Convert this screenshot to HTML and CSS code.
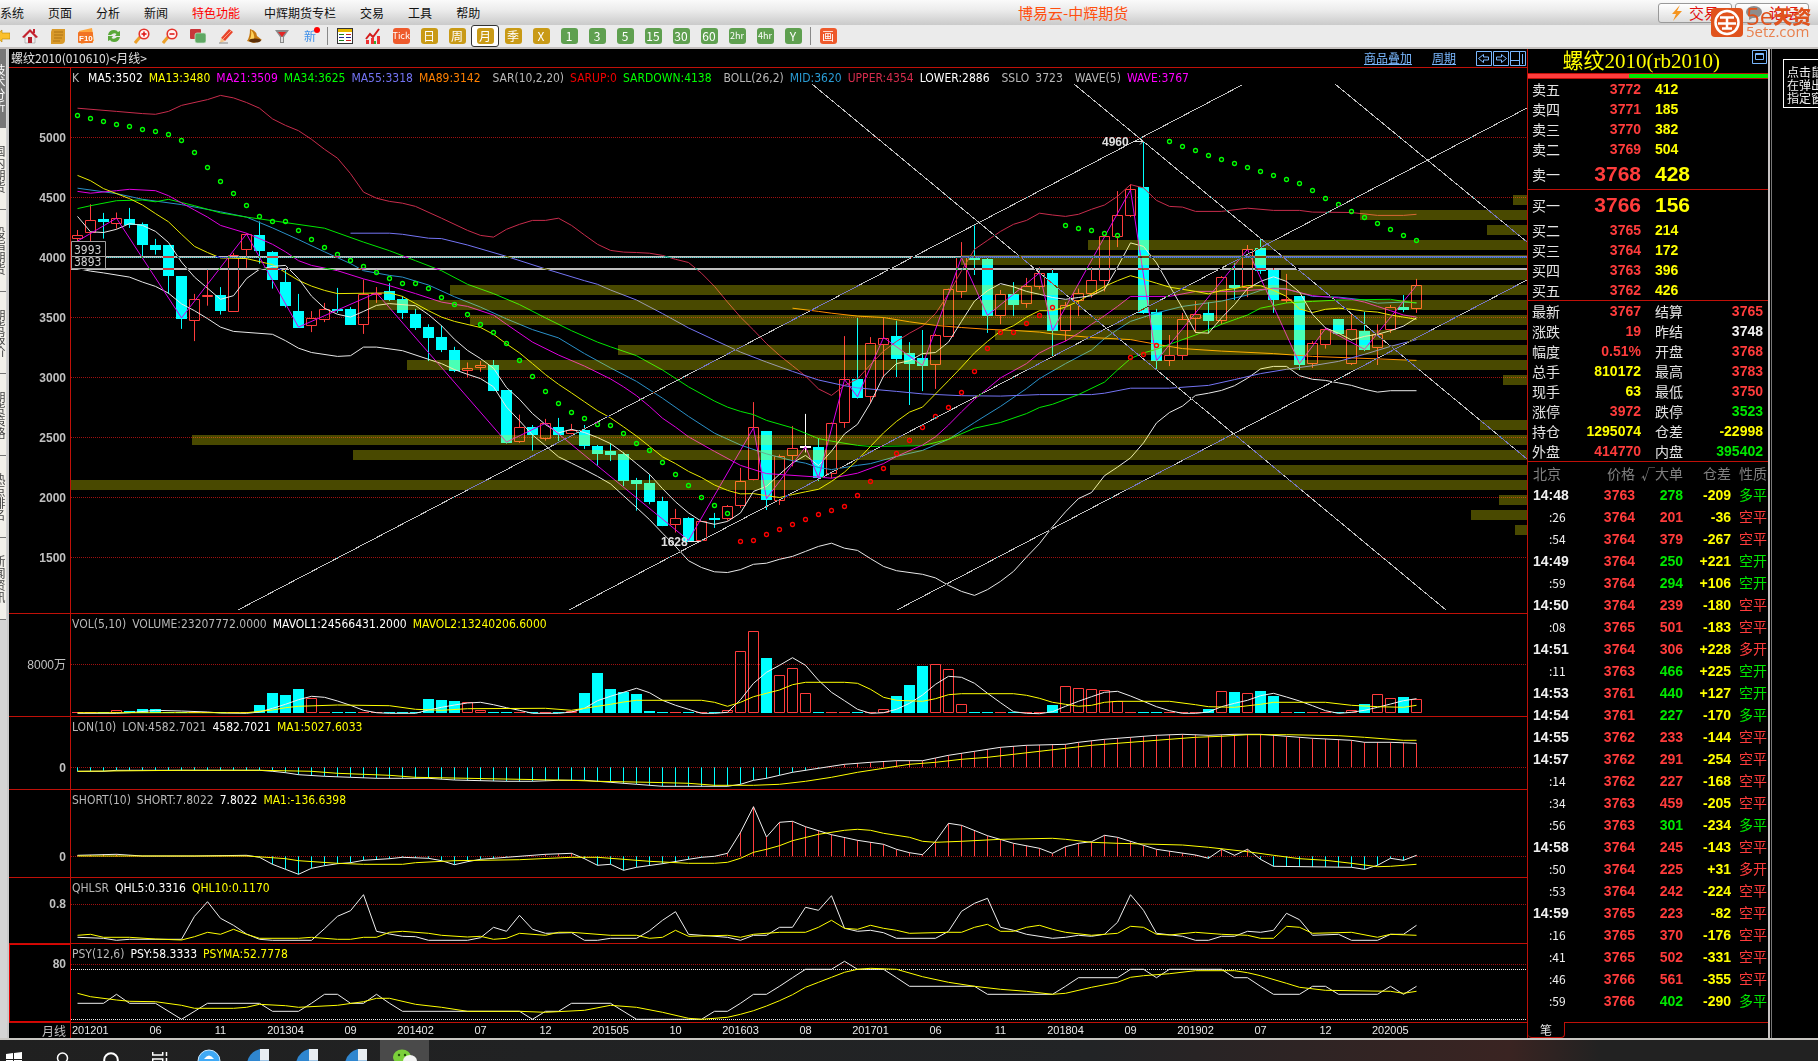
FILE: index.html
```html
<!DOCTYPE html>
<html lang="zh-CN">
<head>
<meta charset="utf-8">
<title>博易云-中辉期货</title>
<link rel="stylesheet" href="styles.css">
</head>
<body>
<header class="menubar">
  <nav class="menu">
    <a href="#">系统</a><a href="#">页面</a><a href="#">分析</a><a href="#">新闻</a><a href="#" class="hot">特色功能</a><a href="#">中辉期货专栏</a><a href="#">交易</a><a href="#">工具</a><a href="#">帮助</a>
  </nav>
  <h1 class="app-title">博易云-中辉期货</h1>
  <div class="head-actions">
    <button class="head-btn" type="button"><svg width="12" height="16" viewBox="0 0 12 16"><path d="M9 0 1 9h4L2 16 11 6H6z" fill="#f5951f"/></svg>交易</button>
    <button class="head-btn" type="button"><svg width="18" height="14" viewBox="0 0 18 14"><ellipse cx="9" cy="6" rx="8" ry="6" fill="#8d8d8d"/><path d="M4 9v5l5-3z" fill="#8d8d8d"/></svg>论坛</button>
  </div>
  <div class="brand">
    <svg width="32" height="29" viewBox="0 0 32 29"><rect width="32" height="29" rx="4" fill="#e0521c"/><circle cx="16" cy="14.500" r="11.500" fill="none" stroke="#fff" stroke-width="2.500"/><path d="M9 9.500h14M7 15.500h18M16 9v12M11 20.500h10" stroke="#fff" stroke-width="2.500" fill="none"/></svg>
    <div class="brand-text"><strong><span class="brand-num">5e</span>天资</strong><span class="brand-url">5etz.com</span></div>
  </div>
</header>
<div class="toolbar">
  <button type="button" aria-label="后退"><svg width="16" height="16" viewBox="0 0 16 16"><path d="M1 8 8 2v3h8v6H8v3z" fill="#fbc02d" stroke="#b98500" stroke-width=".6"/></svg></button>
  <button type="button" aria-label="首页"><svg width="16" height="16" viewBox="0 0 16 16"><path d="M3 8v7h10V8L8 3z" fill="#eee" stroke="#999" stroke-width=".6"/><path d="M0 9 8 1l8 8-2 1-6-6-6 6z" fill="#c4232f"/><path d="M6 15V9h4v6z" fill="#b2202b"/><path d="M11 1h2v4h-2z" fill="#c4232f"/></svg></button>
  <button type="button" aria-label="公告"><svg width="16" height="16" viewBox="0 0 16 16"><path d="M2 1h13v11q0 4-4 4H1V4z" fill="#d99a2b"/><path d="M4 4h9M4 7h9M4 10h8M3 13h7" stroke="#a26b10" stroke-width=".8"/></svg></button>
  <button type="button" aria-label="F10"><svg width="16" height="16" viewBox="0 0 16 16"><path d="M1 3 14 0l2 13-13 3z" fill="#ffa63d"/><rect y="4" width="15" height="11" rx="1" fill="#f27424"/><text x="1" y="13" class="ico-f10">F10</text></svg></button>
  <button type="button" aria-label="刷新"><svg width="16" height="16" viewBox="0 0 16 16"><path d="M2 7q1-5 6-5 3 0 4 2l2-1v5H9l1.500-2Q8 4 5 7zM14 9q-1 5-6 5-3 0-4-2l-2 1V8h5l-1.500 2Q8 12 11 9z" fill="#5aa83a"/></svg></button>
  <button type="button" aria-label="放大"><svg width="16" height="16" viewBox="0 0 16 16"><path d="m6 9-5 6" stroke="#eba02b" stroke-width="3"/><circle cx="10" cy="6" r="4.800" fill="#fff3f3" stroke="#e5332a" stroke-width="1.600"/><path d="M10 3.500v5M7.500 6h5" stroke="#d11" stroke-width="1.500"/></svg></button>
  <button type="button" aria-label="缩小"><svg width="16" height="16" viewBox="0 0 16 16"><path d="m6 9-5 6" stroke="#eba02b" stroke-width="3"/><circle cx="10" cy="6" r="4.800" fill="#fff3f3" stroke="#e5332a" stroke-width="1.600"/><path d="M7.500 6h5" stroke="#d11" stroke-width="1.500"/></svg></button>
  <button type="button" aria-label="叠加"><svg width="16" height="16" viewBox="0 0 16 16"><rect x="0" y="1" width="11" height="10" rx="1" fill="#c8363a"/><rect x="5" y="5" width="11" height="10" rx="2" fill="#5fa864" stroke="#cfe6cf" stroke-width=".7"/></svg></button>
  <button type="button" aria-label="画线"><svg width="16" height="16" viewBox="0 0 16 16"><path d="m3 10 8-9 4 3-8 9z" fill="#e8452c"/><path d="m3 10 4 3-5 2z" fill="#f3c58b"/><path d="m5 11 8-8" stroke="#ff9d7e"/><path d="M1 15h9" stroke="#888"/></svg></button>
  <button type="button" aria-label="预警"><svg width="16" height="16" viewBox="0 0 16 16"><path d="M4 1q7 2 7 7l5 4-8 3-7-2q3-4 3-12z" fill="#c67a13"/><path d="M5 2q4 4 3 9l-5 2q3-5 2-11z" fill="#ffd35c"/><ellipse cx="9" cy="12.500" rx="6" ry="2" fill="#5c2f08"/></svg></button>
  <button type="button" aria-label="过滤"><svg width="16" height="16" viewBox="0 0 16 16"><path d="M1 2h14l-5 7v6H6V9z" fill="#8b8b8b"/><path d="M4 4h8l-4 5z" fill="#e32626"/><path d="M7 9h2v5H7z" fill="#ddd"/></svg></button>
  <button type="button" class="new-btn">新<i></i></button>
  <span class="sep"></span>
  <button type="button" aria-label="报价"><svg width="16" height="16" viewBox="0 0 16 16"><rect x=".5" y=".5" width="15" height="15" fill="#fff" stroke="#333"/><path d="M1 2.500h14" stroke="#e7b800" stroke-width="3"/><path d="M2 6.500h5M2 12.500h5" stroke="#1a7f1a"/><path d="M9 6.500h5M9 12.500h5" stroke="#c22"/><path d="M2 9.500h5M9 9.500h5" stroke="#229"/></svg></button>
  <button type="button" aria-label="走势"><svg width="16" height="16" viewBox="0 0 16 16"><path d="M1 16v-4h3v4zM6 16v-6h3v6zM12 16V8h3v8z" fill="#e33"/><path d="m1 11 4-5 3 3 6-8" stroke="#d51c1c" stroke-width="2" fill="none"/><path d="M9 16v-3h2v3z" fill="#3a3"/></svg></button>
  <button type="button"><b class="chip tick">Tick</b></button>
  <button type="button"><b class="chip gold">日</b></button>
  <button type="button"><b class="chip gold">周</b></button>
  <button type="button" class="active"><b class="chip gold">月</b></button>
  <button type="button"><b class="chip gold">季</b></button>
  <button type="button"><b class="chip gold">X</b></button>
  <button type="button"><b class="chip green">1</b></button>
  <button type="button"><b class="chip green">3</b></button>
  <button type="button"><b class="chip green">5</b></button>
  <button type="button"><b class="chip green">15</b></button>
  <button type="button"><b class="chip green">30</b></button>
  <button type="button"><b class="chip green">60</b></button>
  <button type="button"><b class="chip green small">2hr</b></button>
  <button type="button"><b class="chip green small">4hr</b></button>
  <button type="button"><b class="chip green">Y</b></button>
  <span class="sep"></span>
  <button type="button"><b class="chip tick draw">画</b></button>
</div>
<main class="workspace">
  <nav class="side-tabs">
    <a href="#" class="on">技术分析</a><a href="#">国内期货</a><a href="#">股指期货</a><a href="#">期货报价</a><a href="#">期货策略</a><a href="#">热点排名</a><a href="#">新闻资讯</a>
  </nav>
  <section class="charts">
    <div class="chart-title">
      <h2>螺纹2010(010610)&lt;月线&gt;</h2>
      <a href="#">商品叠加</a><a href="#">周期</a>
      <span class="win-icons"><svg width="51" height="15" viewBox="0 0 51 15" fill="none" stroke="#7ab8ff"><path d="M.5.5h15v14H.5zM17.500.500h15v14h-15zM34.500.500h15v14h-15z"/><path d="m2.500 7.500 5-4v2.500h5v3h-5v2.500zM30.500 7.500l-5-4v2.500h-5v3h5v2.500zM35 9.500h8M43.500 1v13M46.500 3v10" /></svg></span>
    </div>
    <div class="pane pane-main">
      <div class="axis"><span>5000</span><span>4500</span><span>4000</span><span>3500</span><span>3000</span><span>2500</span><span>2000</span><span>1500</span></div>
      <div class="plot">
        <svg id="kline" viewBox="71 68 1456 545" preserveAspectRatio="none"></svg>
        <p class="legend">
          <span class="c-gray k">K</span><span class="c-white">MA5:3502</span><span class="c-yellow">MA13:3480</span><span class="c-magenta">MA21:3509</span><span class="c-green">MA34:3625</span><span class="c-violet">MA55:3318</span><span class="c-orange">MA89:3142</span>
          <span class="c-gray group">SAR(10,2,20)</span><span class="c-red">SARUP:0</span><span class="c-green">SARDOWN:4138</span>
          <span class="c-gray group">BOLL(26,2)</span><span class="c-blue">MID:3620</span><span class="c-crimson">UPPER:4354</span><span class="c-white">LOWER:2886</span>
          <span class="c-gray group">SSLO</span><span class="c-gray">3723</span>
          <span class="c-gray group">WAVE(5)</span><span class="c-magenta">WAVE:3767</span>
        </p>
      </div>
    </div>
    <div class="pane pane-vol">
      <div class="axis"><span>8000万</span></div>
      <div class="plot"><svg id="vol" viewBox="71 614 1456 102" preserveAspectRatio="none"></svg>
        <p class="legend"><span class="c-gray">VOL(5,10)</span><span class="c-gray">VOLUME:23207772.0000</span><span class="c-white">MAVOL1:24566431.2000</span><span class="c-yellow">MAVOL2:13240206.6000</span></p></div>
    </div>
    <div class="pane pane-lon">
      <div class="axis"><span>0</span></div>
      <div class="plot"><svg id="lon" viewBox="71 717 1456 72" preserveAspectRatio="none"></svg>
        <p class="legend"><span class="c-gray">LON(10)</span><span class="c-gray">LON:4582.7021</span><span class="c-white">4582.7021</span><span class="c-yellow">MA1:5027.6033</span></p></div>
    </div>
    <div class="pane pane-short">
      <div class="axis"><span>0</span></div>
      <div class="plot"><svg id="short" viewBox="71 790 1456 87" preserveAspectRatio="none"></svg>
        <p class="legend"><span class="c-gray">SHORT(10)</span><span class="c-gray">SHORT:7.8022</span><span class="c-white">7.8022</span><span class="c-yellow">MA1:-136.6398</span></p></div>
    </div>
    <div class="pane pane-qhl">
      <div class="axis"><span>0.8</span></div>
      <div class="plot"><svg id="qhl" viewBox="71 878 1456 65" preserveAspectRatio="none"></svg>
        <p class="legend"><span class="c-gray">QHLSR</span><span class="c-white">QHL5:0.3316</span><span class="c-yellow">QHL10:0.1170</span></p></div>
    </div>
    <div class="pane pane-psy">
      <div class="axis"><span>80</span></div>
      <div class="plot"><svg id="psy" viewBox="71 944 1456 78" preserveAspectRatio="none"></svg>
        <p class="legend"><span class="c-gray">PSY(12,6)</span><span class="c-white">PSY:58.3333</span><span class="c-yellow">PSYMA:52.7778</span></p></div>
    </div>
    <div class="pane pane-dates">
      <div class="axis">月线</div>
      <div class="dates"><span class="first">201201</span><span>06</span><span>11</span><span>201304</span><span>09</span><span>201402</span><span>07</span><span>12</span><span>201505</span><span>10</span><span>201603</span><span>08</span><span>201701</span><span>06</span><span>11</span><span>201804</span><span>09</span><span>201902</span><span>07</span><span>12</span><span class="last">202005</span></div>
    </div>
  </section>
  <aside class="quote">
    <div class="quote-head"><h2>螺纹2010(rb2010)</h2><svg width="15" height="14" viewBox="0 0 15 14" fill="none" stroke="#7ab8ff"><path d="M.5.5h14v13H.5z"/><path d="M3.500 3.500h8v6h-8zM3 4.500h9" /></svg></div>
    <div class="ratio"><i></i></div>
    <table class="book">
      <tbody>
        <tr><th>卖五</th><td class="up">3772</td><td class="qty">412</td></tr>
        <tr><th>卖四</th><td class="up">3771</td><td class="qty">185</td></tr>
        <tr><th>卖三</th><td class="up">3770</td><td class="qty">382</td></tr>
        <tr><th>卖二</th><td class="up">3769</td><td class="qty">504</td></tr>
        <tr class="best"><th>卖一</th><td class="up">3768</td><td class="qty">428</td></tr>
      </tbody>
      <tbody>
        <tr class="best"><th>买一</th><td class="up">3766</td><td class="qty">156</td></tr>
        <tr><th>买二</th><td class="up">3765</td><td class="qty">214</td></tr>
        <tr><th>买三</th><td class="up">3764</td><td class="qty">172</td></tr>
        <tr><th>买四</th><td class="up">3763</td><td class="qty">396</td></tr>
        <tr><th>买五</th><td class="up">3762</td><td class="qty">426</td></tr>
      </tbody>
    </table>
    <table class="stats">
      <tbody>
        <tr><th>最新</th><td class="up">3767</td><th>结算</th><td class="up">3765</td></tr>
        <tr><th>涨跌</th><td class="up">19</td><th>昨结</th><td class="flat">3748</td></tr>
        <tr><th>幅度</th><td class="up">0.51%</td><th>开盘</th><td class="up">3768</td></tr>
        <tr><th>总手</th><td class="qty">810172</td><th>最高</th><td class="up">3783</td></tr>
        <tr><th>现手</th><td class="qty">63</td><th>最低</th><td class="up">3750</td></tr>
        <tr><th>涨停</th><td class="up">3972</td><th>跌停</th><td class="down">3523</td></tr>
        <tr><th>持仓</th><td class="qty">1295074</td><th>仓差</th><td class="qty">-22998</td></tr>
        <tr><th>外盘</th><td class="up">414770</td><th>内盘</th><td class="down">395402</td></tr>
      </tbody>
    </table>
    <table class="ticks">
      <thead><tr><th>北京</th><th>价格</th><th>√大单</th><th>仓差</th><th>性质</th></tr></thead>
      <tbody id="ticks"></tbody>
    </table>
    <div class="quote-tabs"><button type="button">笔</button></div>
  </aside>
  <aside class="dock"><p class="hint">点击鼠标右键<br>在弹出菜单中<br>指定窗口</p></aside>
</main>
<footer class="taskbar">
  <button type="button" aria-label="开始"><svg width="16" height="16" viewBox="0 0 16 16" fill="#fff"><path d="M0 2 7 1v6H0zM8 1l8-1v7H8zM0 8h7v7l-7-1zM8 8h8v8l-8-1z"/></svg></button>
  <button type="button" aria-label="搜索"><svg width="16" height="16" viewBox="0 0 16 16" fill="none" stroke="#fff" stroke-width="1.500"><circle cx="8.500" cy="6" r="5"/><path d="m5 10-4 5"/></svg></button>
  <button type="button" aria-label="小娜"><svg width="16" height="16" viewBox="0 0 16 16" fill="none" stroke="#fff" stroke-width="2"><circle cx="8" cy="8" r="6.800"/></svg></button>
  <button type="button" aria-label="任务视图"><svg width="16" height="16" viewBox="0 0 16 16" fill="none" stroke="#fff" stroke-width="1.500"><path d="M.7 0v3h10V0M.7 16V7h10v9M14.500 0v4M14.500 6v10"/></svg></button>
  <button type="button" aria-label="浏览器"><svg width="24" height="24" viewBox="0 0 24 24"><circle cx="12" cy="12" r="11" fill="#3fa9f5" stroke="#cfeaff"/><path d="M7 10q5-7 10 0z" fill="#fff"/></svg></button>
  <button type="button" aria-label="博易云 1"><svg width="22" height="22" viewBox="0 0 22 22"><path d="M13 0v22H0V14Q2 3 13 0z" fill="#2f86cf"/><path d="M13 0h9v11h-9z" fill="#e9eef3"/><path d="M13 11h9v11h-9z" fill="#9cc4e6"/></svg></button>
  <button type="button" aria-label="博易云 2"><svg width="22" height="22" viewBox="0 0 22 22"><path d="M13 0v22H0V14Q2 3 13 0z" fill="#2f86cf"/><path d="M13 0h9v11h-9z" fill="#e9eef3"/><path d="M13 11h9v11h-9z" fill="#9cc4e6"/></svg></button>
  <button type="button" aria-label="博易云 3"><svg width="22" height="22" viewBox="0 0 22 22"><path d="M13 0v22H0V14Q2 3 13 0z" fill="#2f86cf"/><path d="M13 0h9v11h-9z" fill="#e9eef3"/><path d="M13 11h9v11h-9z" fill="#9cc4e6"/></svg></button>
  <button type="button" class="open" aria-label="微信"><svg width="24" height="20" viewBox="0 0 24 20"><ellipse cx="9" cy="8" rx="9" ry="7.500" fill="#7bd03a"/><circle cx="6" cy="6" r="1.200" fill="#234d0c"/><circle cx="12" cy="6" r="1.200" fill="#234d0c"/><ellipse cx="17" cy="12" rx="7" ry="6" fill="#f2f2f2"/></svg></button>
</footer>
<script src="charts.js"></script>
</body>
</html>
```

FILE: styles.css
```css
* { box-sizing: border-box; }
body {
  margin: 0;
  min-height: 100vh;
  display: flex;
  flex-direction: column;
  background: #000;
  color: #e0e0e0;
  font: 12px/16px "DejaVu Sans Condensed", "Noto Sans CJK SC", sans-serif;
  overflow-x: hidden;
}
h1, h2, p { margin: 0; font-weight: normal; }
a { color: inherit; text-decoration: none; }
button { font: inherit; padding: 0; margin: 0; border: 0; background: none; color: inherit; }
svg { display: block; }

/* menu bar */
.menubar {
  position: relative;
  height: 25px;
  display: grid;
  grid-template-columns: 690px 1fr auto;
  align-items: center;
  background: linear-gradient(#fafafa, #ececec 40%, #cacaca);
  color: #111;
}
.menu { display: flex; gap: 24px; font: 12px/16px "Noto Sans CJK SC", sans-serif; }
.menu .hot { color: #f00; }
.app-title { margin-left: 328px; font: 15px/20px "Noto Sans CJK SC", sans-serif; color: #ff5010; }
.head-actions { display: flex; gap: 3px; padding-right: 9px; }
.head-btn {
  width: 74px;
  height: 20px;
  display: flex;
  align-items: center;
  justify-content: center;
  gap: 6px;
  border: 1px solid #999;
  border-radius: 3px;
  background: linear-gradient(#fff, #ddd);
  color: #e01010;
  font: 15px/18px "Noto Sans CJK SC", sans-serif;
}
.brand {
  position: absolute;
  right: 5px;
  top: 8px;
  z-index: 2;
  display: flex;
  gap: 3px;
  color: #e0521c;
}
.brand-text { display: flex; flex-direction: column; width: 67px; white-space: nowrap; }
.brand-text strong { display: flex; font: 900 19px/16px "Noto Sans CJK SC", sans-serif; }
.brand-num { font: 24px/15px "Open Sans", sans-serif; }
.brand-url { font: 15px/14px "Open Sans", sans-serif; color: #e8814f; }

/* tool bar */
.toolbar {
  height: 24px;
  display: flex;
  align-items: center;
  padding-left: 0;
  margin-left: -12px;
  background: #ebebeb;
  border-bottom: 2px solid #c4c0be;
}
.toolbar button { width: 28px; height: 22px; display: flex; align-items: center; justify-content: center; }
.toolbar .active { border: 1px solid #333; border-radius: 3px; background: #fff; }
.sep { width: 1px; height: 18px; margin: 0 3px; background: #888; }
.chip {
  width: 17px;
  height: 16px;
  border-radius: 3px;
  color: #fff;
  font: 12px/16px "Noto Sans CJK SC", sans-serif;
  text-align: center;
}
.gold { background: #c99a16; }
.green { background: #5fa050; }
.tick { background: #ee5a2c; font-size: 9px; }
.draw { font-size: 12px; }
.small { font-size: 9px; }
.toolbar .new-btn { position: relative; color: #3f8fe8; font: 12px/16px "Noto Sans CJK SC", sans-serif; }
.new-btn i { position: absolute; right: 4px; top: 2px; width: 6px; height: 6px; border-radius: 50%; background: #f00; }

/* workspace */
.workspace {
  flex: 1;
  display: grid;
  grid-template-columns: 9px minmax(0, 1fr) 241px 50px;
  border-bottom: 2px solid #c8c6c2;
}
.side-tabs { border-right: 2px solid #c9c9c9; background: #d4d4d4; overflow: hidden; }
.side-tabs a {
  display: flex;
  align-items: center;
  justify-content: center;
  height: 82px;
  margin-left: -7px;
  writing-mode: vertical-rl;
  border-bottom: 1px solid #777;
  background: #f2f0ea;
  color: #444;
  font: 12px/13px "Noto Sans CJK SC", sans-serif;
}
.side-tabs .on { height: 79px; background: #777; color: #fff; }

.charts { display: flex; flex-direction: column; min-width: 0; }
.chart-title { height: 18px; display: flex; align-items: center; gap: 20px; padding-left: 2px; color: #7ab8ff; }
.chart-title h2 { flex: 1; font: 12px/16px "Noto Sans CJK SC", sans-serif; color: #e0e0e0; }
.chart-title a { font: 12px/16px "Noto Sans CJK SC", sans-serif; text-decoration: underline; }

.pane {
  flex-basis: 0;
  min-height: 0;
  display: grid;
  grid-template-columns: 62px minmax(0, 1fr);
  grid-template-rows: minmax(0, 1fr);
  border-top: 1px solid #c01008;
}
.pane-main { flex-grow: 545; }
.pane-vol { flex-grow: 102; }
.pane-lon { flex-grow: 72; }
.pane-short { flex-grow: 87; }
.pane-qhl { flex-grow: 65; }
.pane-psy { flex-grow: 78; }
.pane-dates { flex-grow: 15; }
.axis {
  border-right: 1px solid #c01008;
  padding-right: 4px;
  text-align: right;
  color: #c0c0c0;
  font: bold 12px/14px "Liberation Sans", "Noto Sans CJK SC", sans-serif;
  overflow: hidden;
}
.axis span { display: block; }
.pane-main .axis { display: grid; grid-template-rows: repeat(8, 60fr); padding-top: 40px; padding-bottom: 25px; align-items: center; }
.pane-vol .axis { padding-top: 44px; font-weight: normal; }
.pane-lon .axis { padding-top: 44px; }
.pane-short .axis { padding-top: 60px; }
.pane-qhl .axis { padding-top: 19px; }
.pane-psy .axis { padding-top: 12px; border: 1px solid #e00000; padding-right: 4px; }
.pane-dates .axis { font: 12px/15px "Noto Sans CJK SC", sans-serif; }
.plot { display: grid; grid-template: minmax(0, 1fr) / minmax(0, 1fr); }
.plot > * { grid-area: 1 / 1; }
.plot svg { width: 100%; height: 100%; }
.legend {
  align-self: start;
  display: flex;
  gap: 6px;
  padding: 2px 0 0 1px;
  white-space: nowrap;
  font: 12px/16px "DejaVu Sans Condensed", sans-serif;
}
.legend .group { margin-left: 6px; }
.legend .k { margin-right: 3px; }
.c-gray { color: #b8b8b8; }
.c-white { color: #fff; }
.c-yellow { color: #ff0; }
.c-magenta { color: #f0f; }
.c-green { color: #0f0; }
.c-violet { color: #7474f4; }
.c-orange { color: #ff8000; }
.c-red { color: #f00000; }
.c-blue { color: #2a9cd4; }
.c-crimson { color: #d42c4c; }
.dates {
  display: grid;
  grid-template-columns: 52fr repeat(19, 65fr) 169fr;
  font: 11px/15px "Liberation Sans", sans-serif;
  text-align: center;
  color: #e8e8e8;
}
.dates span { min-width: 0; white-space: nowrap; }
.dates .first { text-align: left; padding-left: 1px; }
.dates .last { text-align: left; padding-left: 14px; }

/* chart drawing */
svg text { font: bold 12px "Liberation Sans", sans-serif; fill: #e0e0e0; }
svg .ico-f10 { font-size: 8px; fill: #fff; }
svg .lvl { font: 12px "DejaVu Sans Condensed", sans-serif; fill: #d0d0d0; }
.grid-line { stroke: #a01010; stroke-dasharray: 1 1; }
.band { fill: rgba(255, 255, 0, .285); }
.xor { mix-blend-mode: difference; stroke: #c0c0c0; fill: none; shape-rendering: crispEdges; }

/* quote panel */
.quote { border-left: 1px solid #c01008; display: flex; flex-direction: column; }
.quote-head { height: 24px; display: flex; align-items: flex-start; justify-content: flex-end; gap: 32px; padding: 1px 1px 0 0; }
.quote-head h2 { font: 21px/23px "Liberation Serif", "Noto Sans CJK SC", serif; color: #ff0; }
.ratio { height: 6px; border: solid #c01008; border-width: 1px 0; background: #00e800; }
.ratio i { display: block; width: 42%; height: 4px; background: #ff3c3c; }
table { width: 100%; border-collapse: collapse; table-layout: fixed; }
th, td { padding: 0; height: 20px; line-height: 18px; white-space: nowrap; }
th { font: 14px/18px "Noto Sans CJK SC", sans-serif; text-align: left; color: #e4e4e4; }
td { font: bold 14px/18px "Liberation Sans", "Noto Sans CJK SC", sans-serif; text-align: right; }
.up { color: #ff3c3c; }
.down { color: #00e800; }
.qty { color: #ff0; }
.flat { color: #f0f0f0; }
.book tbody + tbody { border-top: 1px solid #c01008; }
.book th, .stats th { width: 50px; padding-left: 4px; }
.book td:nth-child(2) { width: 63px; }
.book .qty { text-align: left; padding-left: 14px; }
.best th, .best td { height: 30px; }
.best td { font-size: 21px; }
.book tbody + tbody .best > * { height: 31px; }
.stats { border-top: 1px solid #c01008; }
.stats td { width: 63px; }
.stats th:nth-child(3) { padding-left: 14px; width: 60px; }
.stats td:last-child { width: auto; padding-right: 5px; }
.ticks { border-top: 1px solid #c01008; }
.ticks th, .ticks td { height: 22px; text-align: right; }
.ticks thead th { height: 23px; color: #808080; }
.ticks th:nth-child(1) { width: 45px; text-align: left; padding-left: 5px; }
.ticks th:nth-child(2) { width: 62px; }
.ticks th:nth-child(3), .ticks th:nth-child(4) { width: 48px; }
.ticks td:first-child { text-align: left; padding-left: 5px; color: #f0f0f0; }
.ticks .sec td:first-child { font: 12px/18px "Noto Sans CJK SC", sans-serif; padding-left: 21px; }
.ticks td:last-child, .ticks th:last-child { padding-right: 1px; font-weight: normal; }
.quote-tabs { margin-top: auto; height: 16px; display: flex; }
.quote-tabs button {
  width: 37px;
  border-bottom: 1px solid #c01008;
  border-right: 1px solid #c01008;
  border-radius: 0 0 4px 4px;
  font: 12px/14px "Noto Sans CJK SC", sans-serif;
}
.quote-tabs::after { content: ""; flex: 1; border-top: 1px solid #c01008; }

.dock {
  border-left: 2px solid #c9c4c4;
  box-shadow: inset 1px 0 0 #000, inset 2px 0 0 #777;
  padding: 10px 0 0 2px;
  overflow: hidden;
  display: flex;
}
.hint {
  flex: none;
  margin-left: 11px;
  height: 49px;
  border: 1px solid #fff;
  padding: 5px 3px;
  white-space: nowrap;
  color: #f0f0f0;
  font: 12px/13px "Noto Sans CJK SC", sans-serif;
}

/* task bar */
.taskbar {
  height: 21px;
  display: flex;
  overflow: hidden;
  background: linear-gradient(90deg, #202020, #222426 60%, #3a2422 83%, #222 88%);
}
.taskbar button { width: 49px; padding: 9px 0 0; display: flex; justify-content: center; align-items: flex-start; }
.taskbar button:first-child { width: 37px; padding-right: 15px; justify-content: flex-end; }
.taskbar button:nth-child(-n+4) { padding-top: 12px; }
.taskbar .open { background: #4a4a4a; }
```

FILE: charts.js
```js
// Monthly bars are 13px apart; the first one is centred at x = 77.5.
const x = i => 77.5 + 13 * i;
const r = n => Math.round(n * 10) / 10;
// Vertical readings: 2.8 steps per pixel on the price pane, 3 on the indicator panes.
const priceY = v => r(60 + v / 2.8);
const subY = v => r(600 + v / 3);
const UP = '#ff3c3c', DOWN = '#00ffff';

const parse = s => s.trim().split(/\s+/).map(p => p.split(':').map(Number));
const line = (s, color, y) =>
  `<polyline fill="none" stroke="${color}" points="${parse(s).map(([i, v]) => x(i) + ',' + y(v)).join(' ')}"/>`;
const gridLine = (y, cls = 'grid-line') => `<path class="${cls}" d="M71 ${Math.floor(y) + .5}H1527"/>`;
const put = (id, html) => { document.getElementById(id).innerHTML = html; };

// body top, body bottom, high, low, colour (r rising, c falling, w unchanged)
const candles = `491 500 476 510 r|447 483 404 510 r|445 454 428 500 c|442 458 427 472 r|445 461 414 470 c|459 517 455 555 c|517 532 501 545 c|518 605 518 655 c|605 725 605 753 c|670 730 655 787 r|659 664 587 688 r|658 703 636 713 c|545 705 540 705 r|488 533 485 582 r|490 535 452 570 c|538 615 535 640 c|622 689 585 693 c|703 750 655 750 c|723 744 703 762 r|698 727 680 734 r|697 700 638 708 c|697 742 692 742 c|654 741 615 767 r|652 657 636 680 r|647 672 625 675 c|669 708 661 725 c|711 750 697 756 c|748 778 740 843 c|776 812 743 818 c|812 871 803 874 c|863 870 847 889 r|855 861 843 873 r|854 927 840 927 c|924 1072 924 1074 c|1028 1069 993 1072 r|1028 1050 1022 1094 c|1017 1060 1005 1066 r|1028 1049 1002 1067 c|1036 1048 1019 1048 r|1036 1081 1022 1089 c|1081 1103 1078 1136 c|1095 1106 1073 1123 c|1103 1179 1098 1193 c|1176 1187 1170 1262 c|1184 1238 1160 1244 c|1235 1305 1223 1305 c|1283 1303 1257 1323 r|1282 1349 1280 1349 c|1292 1348 1292 1348 r|1282 1287 1268 1310 c|1250 1286 1246 1290 r|1178 1248 1142 1254 r|1028 1177 958 1177 r|1039 1231 1039 1260 c|1110 1234 1105 1246 r|1085 1110 1025 1138 r|1081 1084 991 1099 w|1084 1170 1059 1179 c|1015 1158 1015 1171 r|894 1015 773 1030 r|893 946 722 948 c|793 943 776 960 r|777 799 721 887 r|773 836 730 888 c|820 851 790 966 c|834 857 756 927 c|771 853 767 921 r|642 775 640 775 r|552 649 510 666 r|553 560 463 602 c|557 717 553 764 c|656 716 644 740 r|656 685 622 717 c|634 682 610 694 r|595 635 580 642 r|596 759 586 832 c|687 758 678 787 r|653 674 640 717 r|617 654 580 665 r|494 618 494 648 r|435 495 367 524 r|362 436 348 440 r|356 708 228 711 c|706 843 697 866 c|827 842 770 857 r|726 828 708 840 r|710 726 675 763 r|708 731 678 766 c|608 730 605 740 r|630 638 569 672 c|530 639 518 664 r|526 590 500 599 c|587 672 583 708 c|668 674 599 680 r|661 854 661 868 c|793 850 787 862 r|752 797 749 808 r|725 767 725 767 c|754 850 710 854 r|759 811 705 815 c|766 805 740 854 r|692 757 686 764 r|692 699 658 706 c|631 696 613 708 r`
  .split('|').map(s => s.split(' '));

const candle = ([a, b, h, l, k], i) => {
  const cx = x(i), top = Math.round(priceY(+a)), bot = Math.max(top + 2, Math.round(priceY(+b)));
  const hi = priceY(+h), lo = priceY(+l);
  if (k === 'r') {
    return `<path fill="none" stroke="${UP}" d="M${cx - 5} ${top + .5}h10V${bot - .5}h-10zM${cx} ${Math.min(hi, top)}V${top}M${cx} ${bot}V${Math.max(lo, bot)}"/>`;
  }
  const c = k === 'w' ? '#fff' : DOWN;
  return `<path fill="${c}" d="M${cx - 5.5} ${top}h11V${bot}h-11z"/><path stroke="${c}" d="M${cx} ${hi}V${lo}"/>`;
};

const MA5 = '0:438 1:481 2:483 3:474 4:458 5:463 6:480 7:511 8:566 9:608 10:639 11:670 12:660 13:612 14:586 15:578 16:575 17:612 18:661 19:695 20:712 21:720 22:704 23:687 24:682 26:688 27:713 28:744 29:782 30:813 31:836 32:863 33:917 34:950 35:990 36:1021 37:1044 38:1034 39:1043 40:1057 41:1074 42:1100 43:1130 44:1160 45:1200 46:1237 47:1268 48:1292 49:1300 50:1292 51:1268 52:1208 53:1194 54:1160 55:1128 56:1107 57:1136 58:1095 59:1047 60:1020 61:960 62:885 63:850 64:842 65:822 66:819 67:790 68:732 69:675 70:646 71:626 72:635 73:648 74:656 75:665 76:670 77:665 78:660 79:642 80:580 81:512 82:522 83:568 84:632 85:695 86:763 87:765 88:722 89:685 90:640 91:620 92:607 93:620 94:650 95:712 96:750 97:765 98:784 99:774 100:768 101:758 102:745 103:722';
const MA13 = '0:323 1:338 2:360 4:388 5:406 6:430 7:453 8:488 9:522 10:539 11:554 13:556 15:573 16:595 17:617 18:633 19:645 20:654 24:652 25:662 26:682 27:702 28:720 29:732 31:749 32:768 33:795 34:820 35:850 36:881 37:908 38:932 39:957 40:982 41:1002 42:1027 43:1053 44:1082 45:1111 46:1130 47:1152 48:1169 49:1190 50:1205 51:1215 52:1214 53:1220 54:1225 55:1217 56:1209 57:1202 58:1180 59:1154 60:1120 61:1082 62:1044 63:1012 64:986 65:972 66:935 67:898 68:860 69:820 70:788 71:759 72:744 73:720 74:702 75:702 76:692 77:675 78:655 79:634 80:618 81:604 82:614 83:625 84:636 85:642 86:648 87:655 88:645 89:640 90:632 91:632 92:645 93:662 94:697 95:707 96:698 97:695 98:698 99:703 100:706 101:714 102:720 103:726';
const MA21 = '0:368 1:373 3:366 4:362 6:366 7:380 8:400 9:420 10:440 11:463 13:485 14:500 15:516 16:537 17:562 18:575 20:590 22:613 24:632 26:654 28:678 30:690 32:714 33:740 35:790 37:826 39:857 41:893 42:915 43:940 44:970 45:1003 46:1028 47:1055 49:1096 51:1135 53:1158 57:1168 58:1171 60:1157 62:1130 63:1110 65:1078 66:1055 67:1022 68:985 69:950 70:920 71:890 73:850 74:820 75:802 76:787 77:765 78:740 79:716 80:690 81:662 84:662 86:648 89:648 92:640 93:642 95:660 97:666 98:670 99:678 100:690 101:702 102:714 103:720';
const MA34 = '0:416 1:408 3:394 5:392 6:397 7:390 9:408 11:428 13:440 15:450 19:471 22:510 24:534 26:562 28:590 30:628 32:654 34:685 36:722 38:758 40:790 41:803 43:828 45:868 47:915 49:955 50:972 51:984 52:993 53:1009 55:1030 57:1060 58:1067 60:1079 61:1082 65:1080 67:1062 69:1031 71:1015 73:990 74:973 75:964 77:937 79:902 80:868 81:836 82:820 83:810 84:796 86:770 88:740 90:714 91:695 93:680 95:676 97:672 101:670 102:676 103:680';
const MA55 = '21:485 24:485 25:488 27:499 28:500 30:518 33:550 36:585 39:618 40:628 41:644 43:672 45:710 47:750 49:784 51:818 53:846 55:872 57:896 59:912 60:918 63:928 65:935 68:940 71:941 74:937 78:937 79:933 81:919 84:919 87:911 89:895 91:878 93:866 95:856 97:844 99:824 101:802 103:783';
const MA89 = '55:695 57:704 58:709 60:717 62:721 64:733 66:743 68:749 70:754 72:757 74:762 75:767 78:777 81:783 83:796 85:808 88:815 92:822 95:830 98:834 103:841';
const UPPER = '0:135 3:144 5:150 6:152 7:144 8:127 10:111 11:99 12:106 13:119 14:135 15:165 16:183 17:198 18:222 19:250 20:275 21:318 22:370 23:387 24:396 25:401 26:410 28:443 30:477 31:491 32:496 33:474 34:460 35:449 36:449 37:443 38:463 39:490 40:516 41:533 42:538 43:539 44:541 45:547 46:558 47:567 48:597 49:634 50:678 51:720 52:756 53:794 54:827 55:856 56:885 57:921 58:939 59:911 60:893 61:853 62:815 63:788 64:765 65:745 66:710 67:655 68:590 69:530 70:505 71:480 72:460 73:449 74:429 75:434 76:438 77:432 78:418 79:406 80:382 81:349 82:358 83:393 84:410 85:412 86:424 88:424 90:415 92:421 94:421 95:426 98:427 100:435 102:435 103:432';
const MID = '0:359 3:374 5:390 8:405 11:425 13:440 15:470 17:503 19:537 21:570 22:590 24:603 25:608 27:630 29:663 31:692 33:725 35:755 37:778 39:822 41:862 43:900 45:947 47:998 49:1045 51:1078 53:1103 55:1122 56:1129 57:1141 58:1147 60:1135 61:1130 63:1110 65:1093 67:1062 69:1015 71:970 73:920 74:892 76:850 78:812 79:780 80:755 81:732 83:708 85:690 88:675 90:658 91:645 92:638 93:641 95:662 97:664 99:672 100:681 102:678 103:680';
const LOWER = '0:584 1:591 2:596 4:608 5:622 6:634 7:653 8:683 9:702 10:724 11:748 12:760 15:768 16:786 17:807 18:819 20:830 21:828 22:804 23:804 25:814 27:838 28:850 29:867 30:880 31:892 32:915 33:972 34:1010 35:1050 36:1080 37:1111 38:1129 39:1147 40:1166 41:1187 42:1220 43:1253 44:1287 45:1325 46:1362 47:1402 48:1421 49:1433 50:1435 51:1427 52:1412 53:1409 54:1398 55:1390 56:1376 57:1362 58:1353 59:1367 60:1373 61:1396 62:1418 63:1430 65:1440 66:1450 67:1471 68:1488 69:1499 70:1483 71:1460 72:1432 73:1392 74:1354 75:1307 76:1265 77:1228 78:1211 79:1164 80:1140 81:1114 82:1072 83:1016 84:987 85:969 86:939 87:933 88:925 89:912 90:891 91:865 92:858 93:858 94:884 95:894 96:897 97:904 98:911 99:922 100:930 101:926 103:926';
const WAVE = '0:507 3:443 8:722 13:487 17:748 23:652 33:1070 36:1017 47:1345 52:1030 53:1228 56:1083 57:1170 59:895 60:943 62:777 65:855 68:553 70:715 74:596 75:758 81:364 83:842 90:530 94:850 96:752 99:810 103:631';
const SAR_DOWN = '0:156 1:164 2:172 3:181 4:186 5:194 6:200 7:208 8:225 9:259 10:301 11:340 12:374 13:407 14:438 15:452 16:452 17:477 18:502 19:525 20:545 21:561 22:578 23:595 24:611 25:626 26:626 27:639 28:665 29:684 30:713 31:740 32:763 33:794 34:841 35:886 36:928 37:962 38:987 39:1003 40:1020 41:1023 42:1046 43:1074 44:1093 45:1127 46:1160 47:1191 48:1225 49:1247 50:1270 76:463 77:472 78:477 79:486 80:491 84:228 85:242 86:253 87:267 88:279 89:290 90:301 91:312 92:323 93:335 94:346 95:365 96:388 97:405 98:424 99:441 100:458 101:475 102:491 103:505';
const SAR_UP = '51:1348 52:1345 53:1328 54:1315 55:1300 56:1286 57:1272 58:1261 59:1250 60:1219 61:1180 62:1143 63:1102 64:1065 65:1029 66:998 67:973 68:931 69:872 70:808 71:763 72:763 73:738 74:715 75:693 81:833 82:825 83:799';
const circles = (s, c) => parse(s).map(([i, v]) => `<circle cx="${x(i)}" cy="${Math.floor(priceY(v)) + .5}" r="2" fill="none" stroke="${c}" stroke-width="1.3"/>`).join('');

// Volume-by-price: y, left edge
const bands = [[195, 1513], [210, 1360], [225, 1487], [240, 1088], [255, 961], [270, 1281], [285, 450], [300, 369], [315, 470], [330, 995], [345, 618], [360, 407], [375, 1503], [420, 1480], [435, 192], [450, 353], [465, 890], [480, 71], [495, 1499], [510, 1471], [525, 1515]];
const trends = 'M812 84 1446 610M1074 84 1527 459M1335 84 1527 242M238 610 1242 85M569 610 1527 108M897 610 1527 280';

put('kline',
  [137, 197, 257, 317, 377, 437, 497, 557].map(y => gridLine(y)).join('') +
  candles.map(candle).join('') +
  line(UPPER, '#c82c4c', priceY) + line(MID, '#2a90c8', priceY) + line(LOWER, '#e8e8e8', priceY) +
  line(MA89, '#ff8c00', priceY) + line(MA55, '#7474f4', priceY) + line(MA34, '#00e800', priceY) +
  line(MA21, '#e000e0', priceY) + line(MA13, '#e8e800', priceY) + line(MA5, '#e8e8e8', priceY) + line(WAVE, '#d800e8', priceY) +
  bands.map(([y, l]) => `<path class="band" d="M${l} ${y}H1527v10H${l}z"/>`).join('') +
  circles(SAR_DOWN, '#00ff00') + circles(SAR_UP, '#ff0000') +
  `<path class="xor" d="${trends}"/>` +
  '<path class="xor" stroke-width="2" d="M71 257H1527M71 269H1527"/>' +
  '<path d="M71.500 256.500h34v12h-34z" fill="#000" stroke="#a0a0a0"/><text class="lvl" x="74" y="266">3893</text>' +
  '<path d="M71.500 241.500h34v15h-34z" fill="#000" stroke="#a0a0a0"/><text class="lvl" x="74" y="254">3993</text>' +
  '<text x="1102" y="146">4960</text><path d="M1133 141.500h10m-3-3 3 3-3 3" fill="none" stroke="#e0e0e0"/>' +
  '<text x="661" y="546">1628</text><path d="M688 541.500h12" stroke="#e0e0e0"/>');

// Volume: bar top and colour; months without turnover keep a flat mark
const vols = {3: '331r', 4: '333c', 5: '327c', 6: '327c', 14: '315c', 15: '279c', 16: '285c', 17: '267c', 18: '294r', 27: '297c', 28: '300c', 29: '303c', 30: '307r', 31: '331r', 38: '334r', 39: '279c', 40: '219c', 41: '267c', 42: '276c', 43: '282c', 44: '333c', 50: '331r', 51: '154r', 52: '94r', 53: '174c', 54: '226r', 55: '205r', 56: '280r', 62: '328r', 63: '288c', 64: '255c', 65: '198c', 66: '193r', 67: '208r', 68: '313r', 75: '315c', 76: '259r', 77: '265r', 78: '268r', 79: '271r', 80: '304r', 87: '327c', 88: '274r', 89: '276c', 90: '280r', 91: '273c', 92: '288c', 98: '331r', 99: '312c', 100: '283r', 101: '295r', 102: '291c', 103: '298r'};
let volBars = '';
for (let i = 0; i < 104; i++) {
  const rec = vols[i] || '337' + (candles[i][4] === 'r' ? 'r' : 'c');
  const top = Math.round(subY(parseInt(rec, 10)));
  volBars += top > 711
    ? `<path d="M${x(i) - 5.5} 712h11v1h-11z" fill="${rec.endsWith('r') ? UP : DOWN}"/>`
    : rec.endsWith('r')
      ? `<path d="M${x(i) - 5} ${top + .5}h10V712.500h-10z" fill="none" stroke="${UP}"/>`
      : `<path d="M${x(i) - 5.5} ${top}h11V713h-11z" fill="${DOWN}"/>`;
}
put('vol', gridLine(664) + volBars +
  line('0:340 3:340 4:338 6:331 8:333 10:336 11:339 13:340 14:336 15:325 16:313 17:299 18:289 19:292 20:303 21:316 22:331 23:338 24:340 26:340 27:330 28:322 29:315 30:309 31:307 32:314 33:323 34:331 35:340 37:340 38:336 39:325 40:302 41:289 42:277 43:265 44:278 45:301 46:316 47:328 48:340 49:340 50:337 51:299 52:250 53:217 54:196 55:173 56:196 57:241 58:277 59:302 60:328 61:340 62:338 63:328 64:310 65:285 66:253 67:229 68:232 69:250 70:280 71:308 72:335 73:340 74:341 75:335 76:319 77:304 78:290 79:277 80:274 81:288 82:304 83:320 84:332 85:340 86:340 87:336 88:320 89:310 90:301 91:287 92:280 93:291 94:303 95:317 96:332 97:340 98:337 99:331 100:322 101:312 102:302 103:296', '#f0f0f0', subY) +
  line('0:338 13:338 15:330 16:323 17:319 20:315 24:317 26:328 28:331 30:326 36:325 38:331 40:319 41:313 42:306 43:301 48:301 49:307 50:319 51:307 52:290 53:280 54:270 55:254 56:247 59:247 60:250 61:268 62:292 63:301 65:304 66:296 67:284 68:281 72:281 73:286 74:295 75:307 76:313 77:319 78:316 79:307 80:304 84:304 86:314 87:320 89:322 91:313 92:307 96:307 98:316 100:320 102:322 103:316', '#ffff00', subY));

// Bars from the zero line to an interpolated series
const hist = (s, zero) => {
  const p = parse(s);
  let out = '';
  for (let k = 0; k + 1 < p.length; k++) {
    for (let i = p[k][0]; i < p[k + 1][0] || (i === 103 && k + 2 === p.length); i++) {
      const v = p[k][1] + (p[k + 1][1] - p[k][1]) * (i - p[k][0]) / (p[k + 1][0] - p[k][0]);
      out += `<path stroke="${v < zero ? UP : DOWN}" d="M${x(i)} ${subY(zero)}V${subY(v)}"/>`;
    }
  }
  return out;
};
const LON = '0:514 2:514 3:511 7:511 14:511 15:514 16:518 17:524 19:529 21:532 23:535 27:535 29:540 33:544 35:544 37:541 39:541 41:547 43:553 45:559 50:559 51:553 52:541 53:535 54:526 55:517 57:505 58:499 59:493 61:487 63:482 65:482 66:474 67:466 69:454 71:442 73:436 76:433 77:427 79:418 81:412 83:406 85:403 87:406 89:403 91:403 93:409 95:415 98:421 99:427 101:427 103:430';
put('lon', gridLine(767) + hist(LON, 502) + line(LON, '#f0f0f0', subY) +
  line('0:514 8:511 14:511 18:514 20:520 22:523 24:526 26:532 30:535 34:538 38:541 40:544 44:547 47:550 49:556 52:556 54:553 56:544 58:532 60:517 62:505 64:493 66:487 68:478 70:472 72:463 74:454 76:445 78:436 80:430 82:424 84:418 86:412 88:409 90:404 93:404 97:407 99:412 102:421 103:421', '#ffff00', subY));
const SHORT = '0:766 3:763 5:768 9:768 13:766 14:772 15:793 16:808 17:823 18:805 19:797 20:791 21:788 22:781 24:776 25:772 27:775 28:782 29:794 30:785 31:778 33:772 35:766 36:763 38:760 39:776 40:796 41:793 42:811 43:802 45:791 47:778 48:772 49:769 50:760 51:697 52:620 53:711 54:667 55:664 56:680 58:704 60:721 62:733 63:748 64:758 65:764 66:724 67:670 68:676 70:707 72:730 74:745 75:760 76:740 77:730 78:725 79:706 80:712 82:736 83:748 86:765 87:775 88:748 89:766 90:748 91:778 92:799 98:802 99:808 100:796 101:775 102:781 103:766';
put('short', gridLine(856) + hist(SHORT, 769) + line(SHORT, '#f0f0f0', subY) +
  line('0:768 13:768 15:773 16:776 17:782 20:790 22:793 25:793 26:788 29:782 34:779 38:772 40:772 42:778 44:784 47:790 49:790 50:787 51:775 52:757 53:748 54:737 55:722 57:703 59:691 60:688 61:691 62:700 64:712 65:724 66:727 68:724 71:718 75:715 76:718 78:727 80:730 85:735 87:742 90:755 92:766 94:776 96:781 98:790 100:800 101:799 103:793', '#ffff00', subY));
put('qhl', gridLine(904) +
  line('0:1012 2:1015 3:1021 4:1018 8:1018 9:949 10:905 11:955 12:976 13:1002 14:1018 15:1021 18:1021 19:986 20:949 21:932 22:884 23:994 24:1002 25:1009 26:1010 27:1021 30:1021 31:1013 32:982 33:994 34:946 35:988 36:1000 38:998 39:1021 40:1021 41:1015 43:1015 44:992 45:961 46:935 47:1003 50:1012 51:1021 52:1006 53:1006 54:982 55:982 56:922 57:931 58:887 59:985 60:994 61:991 62:998 63:1015 66:1015 67:994 68:934 69:910 70:895 71:982 72:991 73:1003 75:1015 76:1012 77:1006 78:1009 79:1003 80:967 81:884 82:931 83:1000 85:1009 86:1021 87:1021 88:1009 89:1009 90:994 91:997 92:991 93:940 94:959 95:1006 97:1003 98:1021 100:1021 101:1003 102:1003 103:976', '#f0f0f0', subY) +
  line('0:1006 1:1003 2:1012 4:1012 6:1017 8:1020 9:1010 10:997 11:1003 12:988 13:1003 14:1015 17:1015 18:1012 20:1018 21:1018 22:1012 23:1012 24:997 25:994 27:1000 28:1006 30:1011 31:1009 32:1018 33:1015 34:1000 36:1006 37:997 38:997 41:1006 43:1006 44:1015 45:1012 46:991 47:1009 50:1006 51:1012 52:1003 54:997 56:997 57:982 58:961 59:985 60:988 61:976 62:985 63:991 64:1000 67:997 68:997 69:982 70:973 71:994 72:994 73:982 74:976 75:988 76:997 78:1006 80:1000 81:979 82:982 83:1003 84:1005 86:997 88:1003 90:1006 91:1015 92:1015 93:979 94:982 95:1000 98:997 100:1012 101:1003 103:1006', '#ffff00', subY));
put('psy', gridLine(964) +
  '<path d="M71 969.500H1527M71 1019.500H1527" stroke="#f0f0f0" stroke-dasharray="1 1"/>' +
  line('0:1210 2:1210 3:1183 4:1210 6:1210 8:1258 10:1210 14:1210 15:1234 17:1234 18:1210 19:1183 20:1183 21:1210 22:1210 23:1183 24:1210 25:1234 34:1234 35:1258 36:1234 37:1234 38:1210 41:1210 43:1258 48:1258 49:1234 50:1234 51:1210 52:1183 53:1183 54:1159 55:1133 56:1108 58:1108 59:1084 60:1108 62:1108 63:1133 64:1159 69:1159 70:1183 75:1183 76:1159 77:1133 80:1133 81:1108 82:1108 83:1133 84:1108 88:1108 89:1133 90:1133 91:1159 92:1183 94:1183 95:1159 96:1159 97:1183 100:1183 101:1159 102:1183 103:1159', '#f0f0f0', subY) +
  line('0:1180 1:1190 3:1200 4:1204 6:1205 8:1216 9:1225 12:1225 13:1222 14:1213 16:1217 17:1222 20:1216 22:1205 23:1195 24:1195 26:1213 28:1222 30:1234 34:1234 36:1237 39:1231 41:1216 43:1222 45:1237 47:1255 48:1258 50:1252 51:1243 52:1232 53:1218 54:1202 55:1184 56:1162 57:1147 58:1132 59:1117 60:1108 61:1105 63:1108 65:1130 67:1147 69:1159 71:1168 73:1174 75:1183 76:1180 78:1162 80:1147 81:1132 82:1127 84:1121 86:1112 89:1112 90:1118 91:1127 93:1150 94:1162 96:1171 101:1174 102:1180 103:1174', '#ffff00', subY));

// Trade list: time, price, volume, open-interest change, kind, colours (volume and kind share one)
const trades = `14:48 3763 278 -209 多平 down|:26 3764 201 -36 空平 up|:54 3764 379 -267 空平 up|14:49 3764 250 +221 空开 down|:59 3764 294 +106 空开 down|14:50 3764 239 -180 空平 up|:08 3765 501 -183 空平 up|14:51 3764 306 +228 多开 up|:11 3763 466 +225 空开 down|14:53 3761 440 +127 空开 down|14:54 3761 227 -170 多平 down|14:55 3762 233 -144 空平 up|14:57 3762 291 -254 空平 up|:14 3762 227 -168 空平 up|:34 3763 459 -205 空平 up|:56 3763 301 -234 多平 down|14:58 3764 245 -143 空平 up|:50 3764 225 +31 多开 up|:53 3764 242 -224 空平 up|14:59 3765 223 -82 空平 up|:16 3765 370 -176 空平 up|:41 3765 502 -331 空平 up|:46 3766 561 -355 空平 up|:59 3766 402 -290 多平 down`;
put('ticks', trades.split('|').map(t => {
  const [time, price, vol, diff, kind, c] = t.split(' ');
  return `<tr${time[0] === ':' ? ' class="sec"' : ''}><td>${time}</td><td class="up">${price}</td><td class="${c}">${vol}</td><td class="qty">${diff}</td><td class="${c}">${kind}</td></tr>`;
}).join(''));
```
